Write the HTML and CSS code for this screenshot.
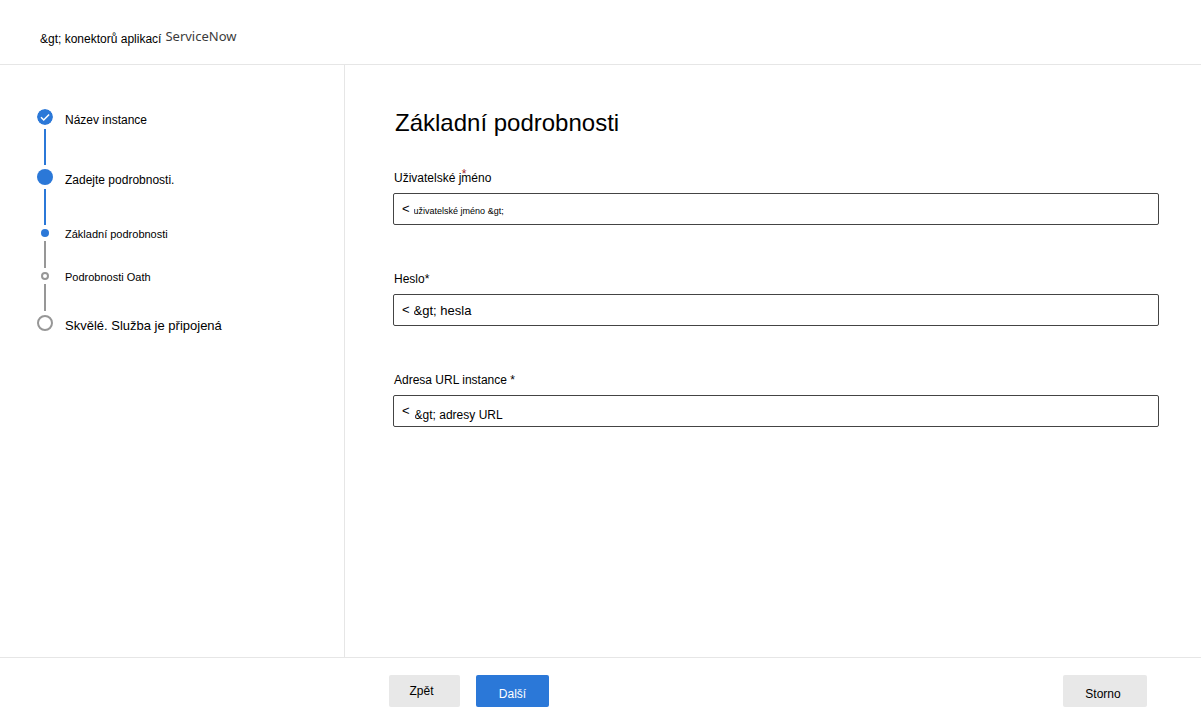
FILE: index.html
```html
<!DOCTYPE html>
<html lang="cs">
<head>
<meta charset="utf-8">
<title>ServiceNow</title>
<link rel="stylesheet" href="styles.css">
</head>
<body>
<div class="page">
  <header class="header">
    <span class="crumb">&amp;gt; konektorů aplikací</span>
    <span class="product">ServiceNow</span>
  </header>
  <div class="content">
    <nav class="sidebar">
      <ol class="steps">
        <li class="step">
          <span class="rail">
            <svg class="marker" viewBox="0 0 16 16" aria-hidden="true"><circle cx="8" cy="8" r="8" fill="#2b78d8"/><path d="M4 8.3 6.7 11 12.1 5.4" fill="none" stroke="#fff" stroke-width="1.5"/></svg>
            <span class="line line-done"></span>
          </span>
          <span class="label">Název instance</span>
        </li>
        <li class="step">
          <span class="rail">
            <span class="marker marker-current"></span>
            <span class="line line-done"></span>
          </span>
          <span class="label">Zadejte podrobnosti.</span>
        </li>
        <li class="step">
          <span class="rail">
            <span class="marker marker-small marker-current"></span>
            <span class="line line-short"></span>
          </span>
          <span class="label label-sub">Základní podrobnosti</span>
        </li>
        <li class="step">
          <span class="rail">
            <span class="marker marker-small marker-open"></span>
            <span class="line line-short"></span>
          </span>
          <span class="label label-sub">Podrobnosti Oath</span>
        </li>
        <li class="step">
          <span class="rail">
            <span class="marker marker-open"></span>
          </span>
          <span class="label label-last">Skvělé. Služba je připojená</span>
        </li>
      </ol>
    </nav>
    <main class="main">
      <h1 class="title">Základní podrobnosti</h1>
      <form class="form" id="details">
        <div class="field">
          <label class="field-label" for="user">Uživatelské jméno<span class="required">*</span></label>
          <div class="box"><span class="prefix">&lt;</span><input class="input input-small" id="user" type="text" value="uživatelské jméno &amp;gt;"></div>
        </div>
        <div class="field">
          <label class="field-label" for="password">Heslo*</label>
          <div class="box"><span class="prefix">&lt;</span><input class="input input-large" id="password" type="text" value="&amp;gt; hesla"></div>
        </div>
        <div class="field">
          <label class="field-label" for="url">Adresa URL instance *</label>
          <div class="box"><span class="prefix">&lt;</span><input class="input input-low" id="url" type="text" value="&amp;gt; adresy URL"></div>
        </div>
      </form>
    </main>
  </div>
  <footer class="footer">
    <button class="button button-back" type="button">Zpět</button>
    <button class="button button-primary" type="submit" form="details">Další</button>
    <button class="button button-cancel" type="button">Storno</button>
  </footer>
</div>
</body>
</html>
```
FILE: styles.css
```css
* { box-sizing: border-box; }
body {
  margin: 0;
  background: #fff;
  color: #000;
  font: 12px/16px "Liberation Sans", Arial, sans-serif;
}
.page { display: flex; flex-direction: column; min-height: 100vh; }
.header {
  display: flex;
  align-items: flex-start;
  gap: 4px;
  padding: 28px 40px 17px;
  border-bottom: 1px solid #e6e6e6;
}
.crumb { padding-top: 3px; }
.product { color: #3b3b3b; font: 13px/16px "Noto Sans", sans-serif; }
.content { display: flex; flex: 1; }
.sidebar {
  width: 345px;
  flex-shrink: 0;
  padding: 44px 37px;
  border-right: 1px solid #e6e6e6;
}
.steps { margin: 0; padding: 0; list-style: none; }
.step { display: flex; gap: 12px; }
.rail {
  display: flex;
  flex-direction: column;
  align-items: center;
  gap: 4px;
  width: 16px;
  padding-bottom: 4px;
}
.marker { display: block; width: 16px; height: 16px; border-radius: 50%; }
.marker-small { width: 8px; height: 8px; }
.marker-current { background: #2b78d8; }
.marker-open { border: 2px solid #979797; }
.line { width: 2px; height: 36px; background: #979797; }
.line-done { background: #2b78d8; }
.line-short { height: 27px; }
.label { padding-top: 3px; }
.label-sub { padding-top: 0; line-height: 10px; font-size: 11px; }
.label-last { font-size: 13px; }
.main { flex: 1; padding: 42px 42px 0 48px; }
.title { margin: 0 0 31px 2px; font-size: 24px; line-height: 32px; font-weight: 400; }
.form { display: flex; flex-direction: column; gap: 46px; }
.field { display: flex; flex-direction: column; gap: 7px; }
.field-label { position: relative; align-self: flex-start; padding-left: 1px; }
.required { position: absolute; right: 25px; top: -4px; color: #a4262c; font-size: 12px; }
.box {
  display: flex;
  height: 32px;
  padding: 0 8px;
  gap: 4px;
  border: 1px solid #444;
  border-radius: 2px;
}
.prefix { font-size: 13px; line-height: 30px; }
.input {
  flex: 1;
  min-width: 0;
  padding: 2px 0 0;
  border: 0;
  outline: 0;
  background: none;
  color: inherit;
  font: 12px "Liberation Sans", Arial, sans-serif;
}
.input-small { padding-top: 4px; font-size: 9px; }
.input-large { padding-top: 0; font-size: 13px; }
.input-low { padding: 8px 0 0 1px; }
.footer {
  display: flex;
  gap: 16px;
  padding: 17px 54px 9px 389px;
  border-top: 1px solid #e6e6e6;
}
.button {
  height: 32px;
  padding: 6px 0 0;
  border: 0;
  border-radius: 2px;
  background: #e8e8e8;
  color: #000;
  font: 12px/16px "Liberation Sans", Arial, sans-serif;
}
.button-back { width: 71px; padding: 0 6px 0 0; }
.button-primary { width: 73px; background: #2b78d8; color: #fff; }
.button-cancel { width: 84px; margin-left: auto; padding-right: 4px; }
```
